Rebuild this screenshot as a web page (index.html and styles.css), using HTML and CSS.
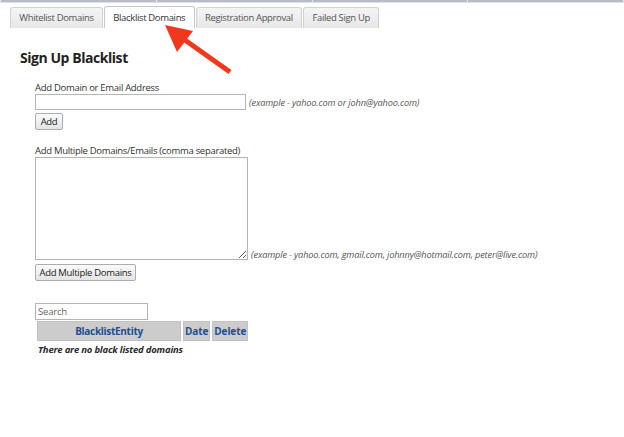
FILE: index.html
```html
<!DOCTYPE html>
<html>
<head>
<meta charset="utf-8">
<link rel="stylesheet" href="styles.css">
</head>
<body>
<div class="topbar"><span></span><span></span><span></span><span></span><span></span></div>
<div class="tabs">
  <div class="tab">Whitelist Domains</div>
  <div class="tab active">Blacklist Domains</div>
  <div class="tab">Registration Approval</div>
  <div class="tab">Failed Sign Up</div>
</div>
<div class="content">
  <h2 class="title">Sign Up Blacklist</h2>
  <div class="form">
    <div class="label">Add Domain or Email Address</div>
    <div class="row">
      <input class="text" type="text">
      <span class="hint">(example - yahoo.com or john@yahoo.com)</span>
    </div>
    <button class="btn btn-add">Add</button>
    <div class="label label-multi">Add Multiple Domains/Emails (comma separated)</div>
    <div class="row row-bottom">
      <textarea class="area"></textarea>
      <span class="hint hint-area">(example - yahoo.com, gmail.com, johnny@hotmail.com, peter@live.com)</span>
    </div>
    <button class="btn btn-multi">Add Multiple Domains</button>
    <input class="search" type="text" placeholder="Search">
    <table class="grid">
      <thead>
        <tr><th class="c-entity">BlacklistEntity</th><th class="c-small">Date</th><th class="c-small">Delete</th></tr>
      </thead>
    </table>
    <div class="empty">There are no black listed domains</div>
  </div>
</div>
<svg class="arrow" width="100" height="70" viewBox="0 0 100 70">
  <line x1="80" y1="56" x2="32" y2="22" stroke="#f2381c" stroke-width="5" stroke-linecap="butt"/>
  <polygon points="15,9 43,15 27,36" fill="#f2381c"/>
</svg>
</body>
</html>
```
FILE: styles.css
```css
html, body {
  margin: 0;
  padding: 0;
  background: #fff;
  font-family: "Open Sans", "Noto Sans", sans-serif;
  color: #333;
}
body {
  position: relative;
  width: 624px;
  height: 437px;
  overflow: hidden;
}
.topbar {
  height: 2px;
  background: #b9bcc4;
  display: flex;
  justify-content: space-between;
  border-bottom: 1px solid #dfe1e5;
}
.topbar span {
  width: 1px;
  background: #e4e6ea;
}
.tabs {
  display: flex;
  gap: 1px;
  padding-left: 10px;
  margin-top: 4px;
}
.tab {
  height: 20px;
  line-height: 20px;
  padding: 0 8.3px;
  font-size: 9.5px;
  color: #555;
  border: 1px solid #d3d3d3;
  border-bottom: none;
  border-radius: 3px 3px 0 0;
  background: linear-gradient(#f4f4f4, #e7e7e7);
  letter-spacing: -0.35px;
  white-space: nowrap;
}
.tab.active {
  background: #fff;
  color: #333;
  height: 21px;
  margin-top: -1px;
  line-height: 22px;
  border-color: #c8c8c8;
}
.content {
  padding-left: 20px;
}
.title {
  margin: 20px 0 0 0;
  font-size: 14px;
  font-weight: 700;
  color: #222;
  line-height: 20px;
  letter-spacing: -0.45px;
}
.form {
  padding-left: 15px;
  margin-top: 14px;
}
.label {
  font-size: 9.5px;
  color: #333;
  line-height: 12px;
  letter-spacing: -0.3px;
  white-space: nowrap;
}
.row {
  display: flex;
  align-items: center;
  gap: 3px;
}
.row-bottom {
  align-items: flex-end;
}
.text {
  box-sizing: border-box;
  width: 211px;
  height: 16px;
  margin: 0;
  border: 1px solid #b5b5b5;
  padding: 0 2px;
}
.hint {
  font-size: 9.2px;
  font-style: italic;
  color: #555;
  letter-spacing: -0.15px;
  white-space: nowrap;
}
.hint-area {
  line-height: 10px;
}
.btn {
  display: block;
  box-sizing: border-box;
  margin: 0;
  font-family: "Open Sans", "Noto Sans", sans-serif;
  font-size: 9.5px;
  color: #222;
  background: linear-gradient(#fbfbfb, #e4e4e4);
  border: 1px solid #adadad;
  border-radius: 2px;
  height: 17px;
  padding: 0 5px;
  line-height: 14px;
  letter-spacing: -0.3px;
  white-space: nowrap;
}
.btn-add {
  margin-top: 3px;
  width: 28px;
  padding: 0;
}
.label-multi {
  margin-top: 16px;
  line-height: 10px;
  height: 11px;
}
.area {
  box-sizing: border-box;
  width: 213px;
  height: 103px;
  margin: 0;
  border: 1px solid #b5b5b5;
  resize: both;
  display: block;
}
.btn-multi {
  margin-top: 4px;
  width: 101px;
  padding: 0;
}
.search {
  display: block;
  box-sizing: border-box;
  margin-top: 22px;
  width: 113px;
  height: 17px;
  border: 1px solid #b5b5b5;
  padding: 0 2px;
  font-family: "Open Sans", "Noto Sans", sans-serif;
  font-size: 9.5px;
  letter-spacing: -0.2px;
}
.search::placeholder {
  color: #666;
}
.grid {
  border-spacing: 2px;
  margin-top: -1px;
}
.grid th {
  background: #cccccc;
  color: #1f4f8e;
  font-size: 10px;
  font-weight: 700;
  height: 18px;
  padding: 0;
  border: 1px solid #c2c2c2;
  letter-spacing: -0.3px;
}
.grid th.c-small {
  padding: 0 1px;
  letter-spacing: -0.1px;
}
.grid th.c-entity {
  width: 142px;
}
.empty {
  font-size: 9.5px;
  font-weight: 700;
  font-style: italic;
  color: #2a2a2a;
  padding-left: 3px;
  margin-top: 0;
  letter-spacing: -0.2px;
}
.arrow {
  position: absolute;
  left: 150px;
  top: 16px;
}
```
